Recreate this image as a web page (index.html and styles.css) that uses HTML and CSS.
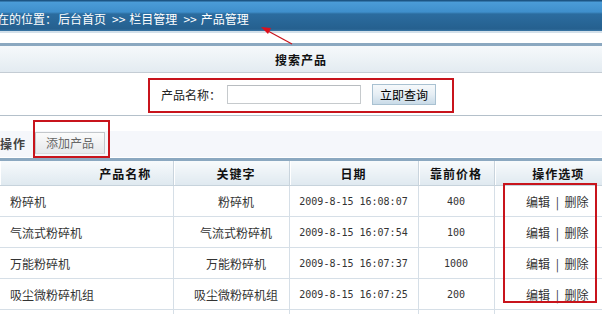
FILE: index.html
```html
<!DOCTYPE html>
<html lang="zh-CN">
<head>
<meta charset="utf-8">
<title>产品管理</title>
<link rel="stylesheet" href="styles.css">
</head>
<body>
<div class="page">
  <div class="topbar">
    <span class="crumb-lead">您现在的位置：</span>
    <span class="crumb">后台首页</span>
    <span class="sep">&gt;&gt;</span>
    <span class="crumb">栏目管理</span>
    <span class="sep">&gt;&gt;</span>
    <span class="crumb">产品管理</span>
  </div>
  <div class="spacer"></div>
  <div class="sec-head">搜索产品</div>
  <div class="search-row">
    <div class="search-box">
      <label class="search-label">产品名称：</label>
      <input class="search-input" type="text">
      <button class="search-btn" type="button">立即查询</button>
    </div>
  </div>
  <div class="toolbar">
    <span class="tool-label">操作</span>
    <span class="tab">添加产品</span>
  </div>
  <div class="table-wrap">
    <table class="grid">
      <colgroup>
        <col class="c1"><col class="c2"><col class="c3"><col class="c4"><col class="c5">
      </colgroup>
      <thead>
        <tr><th class="h-name">产品名称</th><th class="h-key">关键字</th><th>日期</th><th>靠前价格</th><th>操作选项</th></tr>
      </thead>
      <tbody>
        <tr><td class="name">粉碎机</td><td class="key">粉碎机</td><td class="date">2009-8-15 16:08:07</td><td class="num">400</td><td class="ops">编辑 <span class="bar">|</span> 删除</td></tr>
        <tr><td class="name">气流式粉碎机</td><td class="key">气流式粉碎机</td><td class="date">2009-8-15 16:07:54</td><td class="num">100</td><td class="ops">编辑 <span class="bar">|</span> 删除</td></tr>
        <tr><td class="name">万能粉碎机</td><td class="key">万能粉碎机</td><td class="date">2009-8-15 16:07:37</td><td class="num">1000</td><td class="ops">编辑 <span class="bar">|</span> 删除</td></tr>
        <tr><td class="name">吸尘微粉碎机组</td><td class="key">吸尘微粉碎机组</td><td class="date">2009-8-15 16:07:25</td><td class="num">200</td><td class="ops">编辑 <span class="bar">|</span> 删除</td></tr>
        <tr><td></td><td></td><td></td><td></td><td></td></tr>
      </tbody>
    </table>
  </div>
  <svg class="marks" width="602" height="314" viewBox="0 0 602 314">
    <rect x="149" y="79" width="304" height="33" fill="none" stroke="#c8141c" stroke-width="2"/>
    <rect x="34" y="121" width="75" height="36" fill="none" stroke="#c8141c" stroke-width="2"/>
    <rect x="504" y="184" width="92" height="118" fill="none" stroke="#c8141c" stroke-width="2"/>
    <line x1="292" y1="44" x2="268" y2="31" stroke="#c8141c" stroke-width="1.2"/>
    <polygon points="261,27 271,28 268,34" fill="#e0101c"/>
  </svg>
</div>
</body>
</html>
```
FILE: styles.css
```css
html, body {
  margin: 0;
  padding: 0;
  background: #fff;
}
.page {
  position: relative;
  width: 602px;
  height: 314px;
  overflow: hidden;
  font-family: "Noto Sans CJK SC", "Liberation Sans", sans-serif;
  font-size: 12px;
  color: #333;
}
.topbar {
  height: 31px;
  box-sizing: border-box;
  padding-top: 5px;
  display: flex;
  align-items: center;
  white-space: nowrap;
  color: #fff;
  background: linear-gradient(to bottom, #1d5584 0, #1d5584 1px, #4b9cd8 2px, #3f8fcc 12px, #2b6c9f 14px, #25608f 29px, #3c78a6 31px);
}
.crumb-lead {
  flex: none;
  margin-left: -27px;
  margin-right: 1px;
}
.crumb {
  flex: none;
}
.sep {
  flex: none;
  margin: 0 4px 0 6px;
  font-size: 12px;
}
.spacer {
  height: 10px;
  border-top: 2px solid #d3e0ea;
  background: #fff;
}
.sec-head {
  height: 26px;
  border-top: 3px solid #8ba8c0;
  border-bottom: 1px solid #c4ccd4;
  background: linear-gradient(to bottom, #f6f9fb, #e3ebf1);
  display: flex;
  align-items: center;
  justify-content: center;
  font-weight: bold;
  letter-spacing: 1px;
  color: #111;
}
.search-row {
  height: 43px;
  box-sizing: border-box;
  border-bottom: 1px solid #b4c0ca;
  display: flex;
  justify-content: center;
  align-items: center;
}
.search-box {
  width: 306px;
  height: 36px;
  box-sizing: border-box;
  display: flex;
  align-items: center;
  padding-left: 14px;
  margin-left: -2px;
}
.search-label {
  color: #222;
  width: 66px;
}
.search-input {
  width: 134px;
  height: 19px;
  box-sizing: border-box;
  border: 1px solid #c6cacd;
  border-top-color: #b8bcc0;
  margin: 0;
  padding: 0;
}
.search-btn {
  margin-left: 11px;
  width: 64px;
  height: 21px;
  box-sizing: border-box;
  border: 1px solid #a9c1d1;
  background: linear-gradient(to bottom, #f6f9fb, #e6eef4 50%, #c9dbe8);
  font-family: "Noto Sans CJK SC", sans-serif;
  font-size: 12px;
  color: #000;
  padding: 0;
  line-height: 19px;
}
.toolbar {
  height: 42px;
  box-sizing: border-box;
  padding-top: 16px;
  display: flex;
  align-items: flex-start;
  background: linear-gradient(to bottom, #fff 0, #fff 15px, #f5f7fb 15px, #f5f7fb 41px, #fff 41px);
}
.tool-label {
  font-weight: bold;
  color: #444;
  line-height: 24px;
  letter-spacing: 1px;
}
.tab {
  margin-left: 9px;
  width: 70px;
  height: 22px;
  box-sizing: border-box;
  border: 1px solid #c3c7cb;
  border-bottom-color: #d8dbde;
  background: linear-gradient(to bottom, #fbfbfb, #e6e9ec);
  color: #666;
  text-align: center;
  line-height: 20px;
}
.table-wrap {
  border-top: 3px solid #8ba8c0;
}
.grid {
  width: 622px;
  border-collapse: collapse;
  table-layout: fixed;
}
.c1 { width: 173px; }
.c2 { width: 116px; }
.c3 { width: 129px; }
.c4 { width: 76px; }
.c5 { width: 128px; }
.grid th {
  height: 24px;
  padding: 0;
  font-weight: bold;
  letter-spacing: 1px;
  color: #111;
  text-align: center;
  background: linear-gradient(to bottom, #f7fafc, #dfe9f0);
  border-bottom: 1px solid #c7d3dc;
  border-left: 1px solid #c9d4dd;
  box-shadow: inset 1px 0 0 #fff;
}
.grid th:first-child { border-left: none; }
.grid .h-name { padding-left: 78px; }
.grid .h-key { padding-left: 10px; }
.grid td {
  height: 30px;
  padding: 0;
  text-align: center;
  color: #333;
  border-bottom: 1px solid #d6dfe7;
  border-left: 1px solid #d6dfe7;
  white-space: nowrap;
}
.grid td:first-child { border-left: none; }
.grid td.name {
  text-align: left;
  padding-left: 10px;
}
.grid td.key { padding-left: 10px; }
.grid td.date, .grid td.num {
  font-family: "DejaVu Sans Mono", "Liberation Mono", monospace;
  font-size: 10px;
}
.grid td.ops {
  word-spacing: 2px;
  padding-right: 2px;
}
.bar {
  margin: 0 1px;
}
.marks {
  position: absolute;
  left: 0;
  top: 0;
  pointer-events: none;
}
```
